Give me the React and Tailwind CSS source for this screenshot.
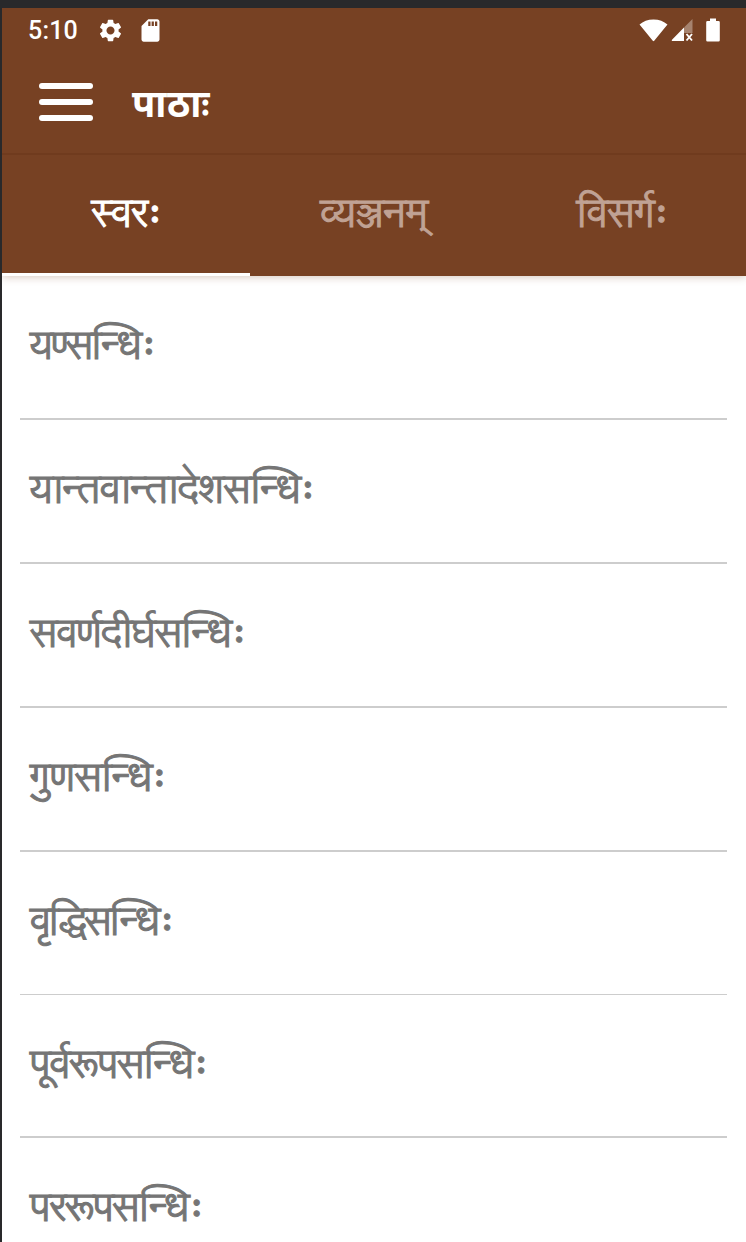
import React from "react";
import { MdSettings, MdSdCard } from "react-icons/md";

const tabs = [
  { label: "स्वरः", active: true, text: "tracking-[-1px]" },
  { label: "व्यञ्जनम्", active: false, text: "tracking-[-0.6px]" },
  { label: "विसर्गः", active: false, text: "tracking-[-0.5px]" },
];

const lessons = [
  { title: "यण्सन्धिः", row: "h-36 border-b-2", text: "tracking-[-2.5px]" },
  { title: "यान्तवान्तादेशसन्धिः", row: "h-36 border-b-2", text: "tracking-[-1px]" },
  { title: "सवर्णदीर्घसन्धिः", row: "h-36 border-b-2", text: "tracking-[-1.3px]" },
  { title: "गुणसन्धिः", row: "h-36 border-b-2", text: "tracking-[-0.8px]" },
  { title: "वृद्धिसन्धिः", row: "h-[143px] border-b", text: "tracking-[-2.8px]" },
  { title: "पूर्वरूपसन्धिः", row: "h-[143px] border-b-2", text: "tracking-[-1.4px]" },
  { title: "पररूपसन्धिः", row: "h-36 border-b-2", text: "tracking-[-1.5px]" },
];

const StatusBar = () => (
  <div className="flex h-[44px] items-center justify-between pl-[26px] pr-[26px] text-white">
    <div className="flex items-center">
      <span className="w-[69px] pt-px font-['Roboto',sans-serif] text-[25px] font-medium leading-none tracking-[0.2px]">
        5:10
      </span>
      <MdSettings className="h-[27px] w-[27px]" />
      <MdSdCard className="ml-[13px] h-[27px] w-[27px]" />
    </div>
    <div className="flex items-center">
      <svg className="h-[23px] w-[29px]" viewBox="0 0 28 22" fill="currentColor">
        <path d="M0.5 5.2C4 2.2 8.500.4 14 .4s10 1.800 13.500 4.800L14.700 21a.9.9 0 0 1-1.400 0z" />
      </svg>
      <svg className="ml-[3px] h-[24px] w-[24px]" viewBox="0 0 24 24" fill="currentColor">
        <path d="M21.500 1v14H13V9.500z" opacity="0.35" />
        <path d="M13 9.500V23H1.500c-.8 0-1-.8-.5-1.300z" />
        <path d="M15.500 16l5.500 6.500M21 16l-5.500 6.500" stroke="currentColor" strokeWidth="1.900" />
      </svg>
      <svg className="ml-[11px] h-[24px] w-[14px]" viewBox="0 0 14 24" fill="currentColor">
        <path d="M4 .5h6V3h2.500a1.300 1.300 0 0 1 1.300 1.300v17.900a1.300 1.300 0 0 1-1.300 1.300h-11A1.300 1.300 0 0 1 .2 22.200V4.300A1.300 1.300 0 0 1 1.500 3H4z" />
      </svg>
    </div>
  </div>
);

const AppBar = () => (
  <header className="flex h-[103px] items-center border-b-2 border-[#703b1e] px-[37px] pb-[2px]">
    <button className="flex w-[54px] flex-col gap-[10px]" aria-label="menu">
      <span className="h-[6px] rounded-full bg-white" />
      <span className="h-[6px] rounded-full bg-white" />
      <span className="h-[6px] rounded-full bg-white" />
    </button>
    <h1 className="ml-[39px] pt-[12px] font-['Noto_Sans_Devanagari','Noto_Sans',sans-serif] text-[38px] font-bold leading-none tracking-[0.4px] text-white">
      पाठाः
    </h1>
  </header>
);

const Tab = ({ label, active, text }) => (
  <div className="flex flex-1 flex-col">
    <div
      className={`flex flex-1 items-center justify-center pt-[2px] font-['Lohit_Devanagari','Noto_Sans',sans-serif] text-[40px] leading-none [-webkit-text-stroke:1px_currentColor] ${text} ${
        active ? "text-white" : "text-[#c0a294]"
      }`}
    >
      {label}
    </div>
    <div className={active ? "h-[3px] bg-white" : "h-[3px]"} />
  </div>
);

export default function App() {
  return (
    <div className="flex h-[1242px] w-[746px] flex-col overflow-hidden border-l-2 border-t-8 border-l-[#29292b] border-t-[#29292b] bg-white">
      <div className="shrink-0 bg-[#774123] shadow-[0_1px_8px_rgba(119,65,35,0.3)]">
        <StatusBar />
        <AppBar />
        <nav className="flex h-[121px]">
          {tabs.map((tab) => (
            <Tab key={tab.label} {...tab} />
          ))}
        </nav>
      </div>

      <ul className="ml-[18px] mr-[19px]">
        {lessons.map(({ title, row, text }) => (
          <li key={title} className={`flex items-center border-[#cdcdcd] pl-[10px] ${row}`}>
            <span
              className={`font-['Lohit_Devanagari','Noto_Sans',sans-serif] text-[40px] leading-none text-[#757575] [-webkit-text-stroke:1px_currentColor] ${text}`}
            >
              {title}
            </span>
          </li>
        ))}
      </ul>
    </div>
  );
}
